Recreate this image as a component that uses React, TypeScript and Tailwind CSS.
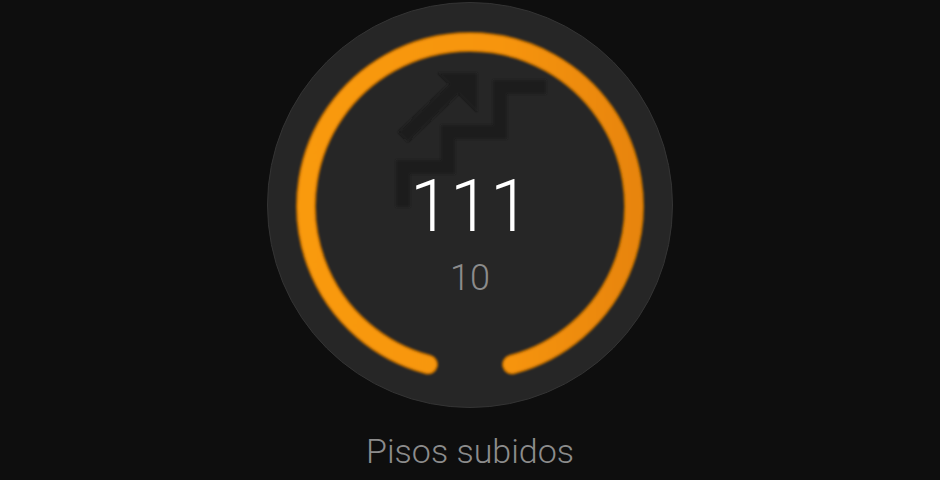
export default function App() {
  const cx = 203, cy = 204, r = 164;
  const dx = 42, dy = Math.sqrt(r * r - dx * dx);
  const arc = `M ${cx - dx} ${cy + dy} A ${r} ${r} 0 1 1 ${cx + dx} ${cy + dy}`;
  return (
    <div className="w-[940px] h-[480px] bg-[#0e0e0e] flex flex-col items-center overflow-hidden font-['Roboto',sans-serif]">
      <div className="relative mt-[2px] w-[406px] h-[406px] shrink-0 rounded-full bg-[#262626] border border-[#343434] flex flex-col items-center">
        <svg className="absolute -inset-px" width="406" height="406" viewBox="0 0 406 406" fill="none">
          <defs>
            <filter id="soft" x="-10%" y="-10%" width="120%" height="120%"><feGaussianBlur stdDeviation="1.3" /></filter>
            <filter id="softer" x="-10%" y="-10%" width="120%" height="120%"><feGaussianBlur stdDeviation="1" /></filter>
            <linearGradient id="ring" x1="0" y1="0" x2="1" y2="0">
              <stop offset="0" stopColor="#f99a10" />
              <stop offset="0.6" stopColor="#f7950e" />
              <stop offset="1" stopColor="#e8850a" />
            </linearGradient>
          </defs>
          <g transform="translate(-267 -2)" stroke="#1b1b1b" strokeWidth="14" filter="url(#softer)">
            <path d="M403 207V167H448V132H500V87H546" />
            <path d="M403 137L458 85" />
            <path d="M438 73H477V112Z" fill="#1b1b1b" stroke="none" />
          </g>
          <g filter="url(#soft)" strokeLinecap="round">
            <path d={arc} stroke="#c87203" strokeWidth="20" />
            <path d={arc} stroke="url(#ring)" strokeWidth="16" />
          </g>
        </svg>
        <div className="relative mt-[159px] text-[72px] leading-[90px] font-light text-white">111</div>
        <div className="relative mt-[5px] text-[36px] leading-[42px] font-light text-[#8c8c8c]">10</div>
      </div>
      <div className="mt-[23px] text-[34px] leading-[40px] font-light text-[#8c8c8c]">Pisos subidos</div>
    </div>
  );
}
